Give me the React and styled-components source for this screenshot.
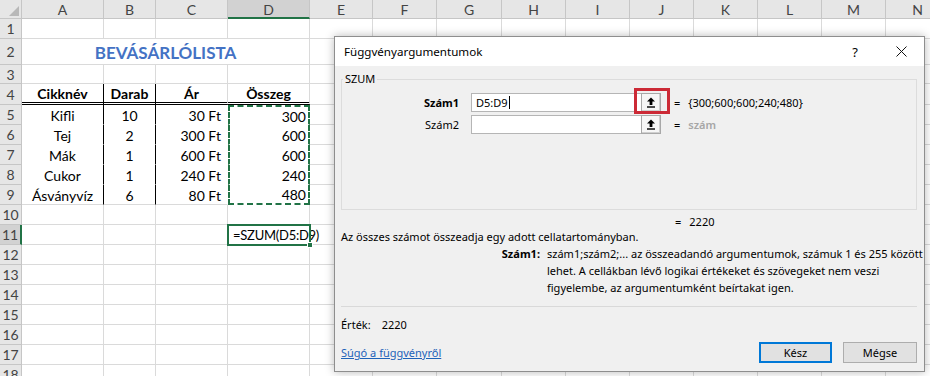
import React from 'react';
import styled, { createGlobalStyle, css } from 'styled-components';

const GRID = '#dadada';
const GREEN = '#217346';
const HEADER_BG = '#e6e6e6';
const HEADER_SEL = '#d2d2d2';
const HEADER_LINE = '#c6c6c6';

const GlobalStyle = createGlobalStyle`
  html, body { margin: 0; padding: 0; background: #fff; overflow: hidden; }
  *, *::before, *::after { box-sizing: border-box; }
`;

const COLS = [82, 52, 72, 82, 63, 64, 65, 64, 64, 64, 64, 64, 64, 64];
const LETTERS = 'ABCDEFGHIJKLMN'.split('');
const ROW_HEIGHTS = [20, 26, 19, 21, 20, 20, 20, 20, 20, 20, 20, 20, 20, 20, 20, 20, 20, 20];

const Page = styled.div`
  position: relative;
  width: 930px;
  height: 376px;
  overflow: hidden;
  font-family: Lato, "Liberation Sans", sans-serif;
`;

const Sheet = styled.div`
  display: grid;
  grid-template-columns: 22px ${COLS.map((c) => `${c}px`).join(' ')};
  grid-template-rows: 19px ${ROW_HEIGHTS.map((h) => `${h}px`).join(' ')};
  width: max-content;
`;

const Corner = styled.div`
  background: ${HEADER_BG};
  border-right: 1px solid ${HEADER_LINE};
  border-bottom: 1px solid ${HEADER_LINE};
  display: flex;
  align-items: flex-end;
  justify-content: flex-end;
  padding: 0 2px 2px 0;
`;

const ColHeader = styled.div`
  background: ${(p) => (p.$sel ? HEADER_SEL : HEADER_BG)};
  border-right: 1px solid ${HEADER_LINE};
  border-bottom: ${(p) => (p.$sel ? `2px solid ${GREEN}` : `1px solid ${HEADER_LINE}`)};
  color: #444;
  font-size: 14px;
  display: flex;
  align-items: center;
  justify-content: center;
  padding-top: ${(p) => (p.$sel ? 1 : 0)}px;
`;

const RowHeader = styled.div`
  background: ${(p) => (p.$sel ? HEADER_SEL : HEADER_BG)};
  border-right: ${(p) => (p.$sel ? `2px solid ${GREEN}` : `1px solid ${HEADER_LINE}`)};
  border-bottom: 1px solid ${HEADER_LINE};
  color: #444;
  font-size: 14px;
  display: flex;
  align-items: center;
  justify-content: center;
`;

const Cell = styled.div`
  position: relative;
  display: flex;
  align-items: center;
  justify-content: ${(p) =>
    p.$align === 'right' ? 'flex-end' : p.$align === 'center' ? 'center' : 'flex-start'};
  padding: 1px ${(p) => p.$padR ?? 3}px 0 3px;
  border-right: 1px solid ${(p) => p.$right || GRID};
  border-bottom: ${(p) => p.$bottom || `1px solid ${GRID}`};
  font-size: 14px;
  font-weight: ${(p) => (p.$bold ? 700 : 400)};
  color: #000;
  white-space: nowrap;
  min-width: 0;
  ${(p) =>
    p.$ants &&
    css`
      border-left: 2px dashed ${GREEN};
      border-right: 2px dashed ${GREEN};
      ${p.$ants === 'top' ? `border-top: 2px dashed ${GREEN};` : ''}
      border-bottom: ${p.$ants === 'bottom' ? `2px dashed ${GREEN}` : '1px solid #fff'};
    `}
  ${(p) =>
    p.$active &&
    css`
      z-index: 2;
      outline: 2px solid ${GREEN};
      outline-offset: -1px;
      padding-left: 5px;
      font-size: 13px;
      letter-spacing: -0.25px;
      &::after {
        content: '';
        position: absolute;
        right: -4px;
        bottom: -4px;
        width: 6px;
        height: 6px;
        background: ${GREEN};
        border: 1px solid #fff;
      }
    `}
`;

const TitleCell = styled(Cell)`
  grid-column: span 4;
  font-size: 17px;
  font-weight: 700;
  color: #4472c4;
`;

/* ---------- dialog ---------- */

const Dialog = styled.div`
  position: absolute;
  left: 334px;
  top: 36px;
  width: 591px;
  height: 336px;
  background: #f0f0f0;
  border: 1px solid #8e8e8e;
  box-shadow: 0 0 9px rgba(0, 0, 0, 0.28);
  display: flex;
  flex-direction: column;
  font-family: "Noto Sans", "Open Sans", sans-serif;
  font-size: 11px;
  color: #000;
`;

const TitleBar = styled.div`
  height: 29px;
  flex: none;
  background: #fff;
  display: flex;
  align-items: center;
  padding-left: 9px;
`;

const TitleText = styled.div`
  flex: 1;
  font-size: 11.6px;
`;

const TitleButton = styled.div`
  width: 46px;
  height: 29px;
  display: flex;
  align-items: center;
  justify-content: center;
  font-size: 13px;
`;

const Body = styled.div`
  flex: 1;
  display: flex;
  flex-direction: column;
  padding: 0 7px 8px 6px;
`;

const Group = styled.fieldset`
  margin: 5px 0 0 0;
  height: 139px;
  flex: none;
  padding: 0;
  border: 1px solid #dcdcdc;
  min-width: 0;
`;

const Legend = styled.legend`
  padding: 0 2px;
  margin-left: 1px;
  line-height: 16px;
  font-size: 11px;
`;

const ArgGrid = styled.div`
  display: grid;
  grid-template-columns: 129px 170px 20px 1fr;
  grid-auto-rows: 19px;
  row-gap: 3px;
  margin-top: 6px;
  align-items: center;
`;

const ArgLabel = styled.div`
  text-align: right;
  padding-right: 12px;
  font-weight: ${(p) => (p.$bold ? 700 : 400)};
`;

const ArgInput = styled.div`
  height: 19px;
  background: #fff;
  border: 1px solid #b5b5b5;
  border-right: none;
  display: flex;
  align-items: center;
  padding-left: 4px;
  font-size: 11px;
`;

const Caret = styled.span`
  display: inline-block;
  width: 1px;
  height: 13px;
  background: #000;
  margin-left: 1px;
`;

const RefButton = styled.div`
  position: relative;
  height: 19px;
  background: #f6f6f6;
  border: 1px solid #a8a8a8;
  box-shadow: inset -1px -1px 0 #cfcfcf;
  display: flex;
  align-items: center;
  justify-content: center;
`;

const Highlight = styled.div`
  position: absolute;
  left: -8px;
  right: -10px;
  top: -6px;
  bottom: -3px;
  border: 3px solid #cc2a36;
  pointer-events: none;
`;

const ArgValue = styled.div`
  display: flex;
  gap: 8px;
  padding-left: 13px;
  white-space: nowrap;
`;

const ValueText = styled.span`
  color: ${(p) => (p.$muted ? '#a6a6a6' : '#000')};
  font-weight: ${(p) => (p.$muted ? 600 : 400)};
`;

const ResultRow = styled.div`
  margin-top: 4px;
  height: 15px;
  line-height: 15px;
  padding-left: 334px;
  display: flex;
  gap: 8px;
`;

const Description = styled.div`
  height: 16px;
  line-height: 16px;
  white-space: nowrap;
`;

const ArgHelp = styled.div`
  display: grid;
  grid-template-columns: 199px 1fr;
  column-gap: 7px;
  line-height: 17px;
  height: 51px;
  flex: none;
  white-space: nowrap;
`;

const ArgHelpLabel = styled.div`
  text-align: right;
  font-weight: 700;
`;

const Separator = styled.div`
  margin-top: 10px;
  height: 1px;
  flex: none;
  background: #d9d9d9;
`;

const ValueRow = styled.div`
  margin-top: 10px;
  height: 16px;
  line-height: 16px;
  display: flex;
  gap: 11px;
`;

const BottomRow = styled.div`
  margin-top: 9px;
  height: 21px;
  display: flex;
  align-items: center;
`;

const HelpLink = styled.a`
  flex: 1;
  color: #1c62b9;
  text-decoration: underline;
  cursor: pointer;
`;

const DlgButton = styled.div`
  width: ${(p) => p.$w}px;
  height: 21px;
  margin-left: ${(p) => p.$ml || 0}px;
  background: #e1e1e1;
  border: ${(p) => (p.$primary ? '2px solid #0078d7' : '1px solid #adadad')};
  display: flex;
  align-items: center;
  justify-content: center;
`;

const ArrowIcon = () => (
  <svg width="10" height="11" viewBox="0 0 10 11">
    <path d="M5 0.5 L9 4.6 H6.4 V8 H3.6 V4.6 H1 Z" fill="#000" />
    <rect x="1" y="9.3" width="8" height="1.4" fill="#000" />
  </svg>
);

const CloseIcon = () => (
  <svg width="11" height="11" viewBox="0 0 11 11">
    <path d="M0.5 0.5 L10.5 10.5 M10.5 0.5 L0.5 10.5" stroke="#111" strokeWidth="1" />
  </svg>
);

const CornerTriangle = () => (
  <svg width="10" height="10" viewBox="0 0 10 10">
    <path d="M10 0 L10 10 L0 10 Z" fill="#b8b8b8" />
  </svg>
);

/* ---------- data ---------- */

const TABLE = [
  ['Kifli', '10', '30 Ft', '300'],
  ['Tej', '2', '300 Ft', '600'],
  ['Mák', '1', '600 Ft', '600'],
  ['Cukor', '1', '240 Ft', '240'],
  ['Ásványvíz', '6', '80 Ft', '480'],
];
const HEAD = ['Cikknév', 'Darab', 'Ár', 'Összeg'];

function cellProps(r, c) {
  const props = {};
  let text = null;
  const inTable = r >= 4 && r <= 9 && c <= 3;
  if (inTable) {
    props.$bottom = '1px solid #fff';
    props.$right = c <= 1 ? '#000' : '#fff';
    if (c === 2) props.$right = r === 4 ? GRID : '#fff';
    if (c === 3) props.$right = GRID;
    if (r === 9) props.$bottom = `1px solid ${GRID}`;
  }
  if (r === 4 && c <= 3) {
    props.$bottom = '3px double #000';
    props.$bold = true;
    props.$align = 'center';
    text = HEAD[c];
  }
  if (r >= 5 && r <= 9 && c <= 3) {
    const row = TABLE[r - 5];
    text = row[c];
    if (c <= 1) props.$align = 'center';
    if (c === 2) {
      props.$align = 'right';
      props.$padR = 6;
    }
    if (c === 3) {
      props.$align = 'right';
      props.$padR = 2;
      props.$ants = r === 5 ? 'top' : r === 9 ? 'bottom' : 'mid';
    }
  }
  if (r === 11 && c === 3) {
    props.$active = true;
    text = '=SZUM(D5:D9)';
  }
  return { props, text };
}

function SheetView() {
  const cells = [];
  cells.push(
    <Corner key="corner">
      <CornerTriangle />
    </Corner>
  );
  LETTERS.forEach((l, i) =>
    cells.push(
      <ColHeader key={`h${l}`} $sel={i === 3}>
        {l}
      </ColHeader>
    )
  );
  ROW_HEIGHTS.forEach((_, idx) => {
    const r = idx + 1;
    cells.push(
      <RowHeader key={`r${r}`} $sel={r === 11}>
        {r}
      </RowHeader>
    );
    LETTERS.forEach((l, c) => {
      if (r === 2 && c === 0) {
        cells.push(
          <TitleCell key="title" $align="center">
            BEVÁSÁRLÓLISTA
          </TitleCell>
        );
        return;
      }
      if (r === 2 && c >= 1 && c <= 3) return;
      const { props, text } = cellProps(r, c);
      cells.push(
        <Cell key={`${l}${r}`} {...props}>
          {text}
        </Cell>
      );
    });
  });
  return <Sheet>{cells}</Sheet>;
}

function FunctionDialog() {
  return (
    <Dialog>
      <TitleBar>
        <TitleText>Függvényargumentumok</TitleText>
        <TitleButton>?</TitleButton>
        <TitleButton>
          <CloseIcon />
        </TitleButton>
      </TitleBar>
      <Body>
        <Group>
          <Legend>SZUM</Legend>
          <ArgGrid>
            <ArgLabel $bold>Szám1</ArgLabel>
            <ArgInput>
              D5:D9
              <Caret />
            </ArgInput>
            <RefButton>
              <ArrowIcon />
              <Highlight />
            </RefButton>
            <ArgValue>
              <span>=</span>
              <ValueText>{'{300;600;600;240;480}'}</ValueText>
            </ArgValue>

            <ArgLabel>Szám2</ArgLabel>
            <ArgInput />
            <RefButton>
              <ArrowIcon />
            </RefButton>
            <ArgValue>
              <span>=</span>
              <ValueText $muted>szám</ValueText>
            </ArgValue>
          </ArgGrid>
        </Group>
        <ResultRow>
          <span>=</span>
          <span>2220</span>
        </ResultRow>
        <Description>Az összes számot összeadja egy adott cellatartományban.</Description>
        <ArgHelp>
          <ArgHelpLabel>Szám1:</ArgHelpLabel>
          <div>
            szám1;szám2;... az összeadandó argumentumok, számuk 1 és 255 között
            <br />
            lehet. A cellákban lévő logikai értékeket és szövegeket nem veszi
            <br />
            figyelembe, az argumentumként beírtakat igen.
          </div>
        </ArgHelp>
        <Separator />
        <ValueRow>
          <span>Érték:</span>
          <span>2220</span>
        </ValueRow>
        <BottomRow>
          <HelpLink>Súgó a függvényről</HelpLink>
          <DlgButton $primary $w={73}>
            Kész
          </DlgButton>
          <DlgButton $w={74} $ml={11}>
            Mégse
          </DlgButton>
        </BottomRow>
      </Body>
    </Dialog>
  );
}

export default function App() {
  return (
    <>
      <GlobalStyle />
      <Page>
        <SheetView />
        <FunctionDialog />
      </Page>
    </>
  );
}
